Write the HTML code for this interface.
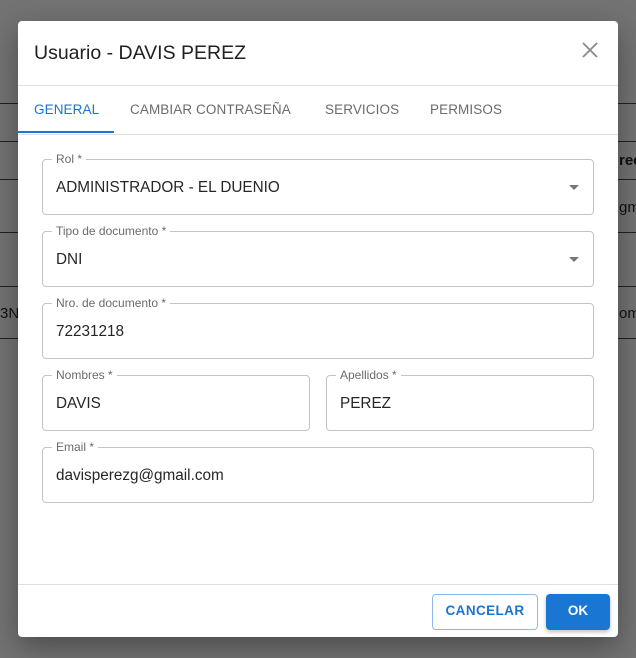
<!DOCTYPE html>
<html><head><style>
*{box-sizing:border-box;margin:0;padding:0}
body{width:636px;height:658px;background:#737373;font-family:"Liberation Sans",sans-serif;position:relative;overflow:hidden}
.ln{position:absolute;height:1px;background:#222;left:0;width:636px}
.bg{position:absolute;font-size:15px;color:#111}
.dlg{position:absolute;left:18px;top:21px;width:600px;height:616px;background:#fff;border-radius:4px;box-shadow:0 10px 30px rgba(0,0,0,.35)}
.title{position:absolute;left:16px;top:21px;font-size:19.5px;color:#212121}
.x{position:absolute;left:562px;top:19px}
.hr{position:absolute;left:0;width:600px;height:1px;background:#e0e0e0}
.tab{position:absolute;top:81px;font-size:13.5px;color:#6b6b6b;letter-spacing:.1px}
.f{position:absolute;border:1px solid #c4c4c4;border-radius:4px;height:56px}
.f .l{position:absolute;top:-8px;left:9px;background:#fff;padding:0 4px;font-size:12px;color:#6b6b6b}
.f .v{position:absolute;left:13px;top:19px;font-size:15.3px;color:#262626}
.f .a{position:absolute;right:14px;top:25px;width:0;height:0;border-left:5px solid transparent;border-right:5px solid transparent;border-top:5px solid #757575}
</style></head><body>
<div class="ln" style="top:103px"></div><div class="ln" style="top:141px"></div><div class="ln" style="top:179px"></div><div class="ln" style="top:232px"></div><div class="ln" style="top:286px"></div><div class="ln" style="top:338px"></div>
<div class="bg" style="left:619px;top:152px;font-weight:bold">rec</div>
<div class="bg" style="left:619px;top:199px">gm</div>
<div class="bg" style="left:619px;top:305px">om</div>
<div class="bg" style="left:0;top:305px">3N</div>
<div class="dlg">
<div class="title">Usuario - DAVIS PEREZ</div>
<svg class="x" width="20" height="20" viewBox="0 0 20 20"><path d="M3 3L17 17M17 3L3 17" stroke="#8a8a8a" stroke-width="1.8"/></svg>
<div class="hr" style="top:64px"></div>
<div class="tab" style="left:16px;color:#1976d2">GENERAL</div>
<div style="position:absolute;left:0;top:110px;width:96px;height:2px;background:#1976d2"></div>
<div class="tab" style="left:112px">CAMBIAR CONTRASEÑA</div>
<div class="tab" style="left:307px">SERVICIOS</div>
<div class="tab" style="left:412px">PERMISOS</div>
<div class="hr" style="top:113px"></div>
<div class="f" style="left:24px;top:138px;width:552px"><span class="l">Rol *</span><span class="v">ADMINISTRADOR - EL DUENIO</span><span class="a"></span></div>
<div class="f" style="left:24px;top:210px;width:552px"><span class="l">Tipo de documento *</span><span class="v">DNI</span><span class="a"></span></div>
<div class="f" style="left:24px;top:282px;width:552px"><span class="l">Nro. de documento *</span><span class="v">72231218</span></div>
<div class="f" style="left:24px;top:354px;width:268px"><span class="l">Nombres *</span><span class="v">DAVIS</span></div>
<div class="f" style="left:308px;top:354px;width:268px"><span class="l">Apellidos *</span><span class="v">PEREZ</span></div>
<div class="f" style="left:24px;top:426px;width:552px"><span class="l">Email *</span><span class="v">davisperezg@gmail.com</span></div>
<div class="hr" style="top:563px"></div>
<div style="position:absolute;left:414px;top:573px;width:106px;height:36px;border:1px solid #8fbbe8;border-radius:4px;color:#1976d2;font-size:13.5px;font-weight:bold;text-align:center;line-height:31px;letter-spacing:.4px">CANCELAR</div>
<div style="position:absolute;left:528px;top:573px;width:64px;height:36px;background:#1976d2;border-radius:4px;color:#fff;font-size:13.5px;font-weight:bold;text-align:center;line-height:33px;box-shadow:0 2px 4px rgba(0,0,0,.25)">OK</div>
</div>
</body></html>
